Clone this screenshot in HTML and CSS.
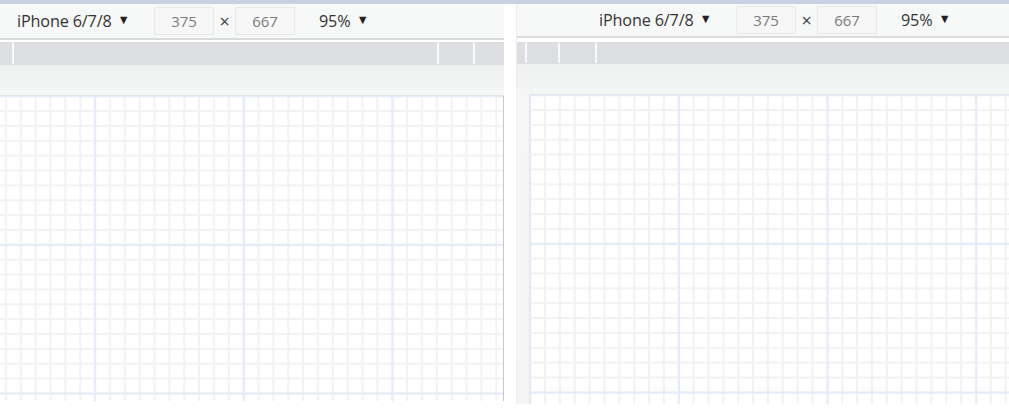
FILE: index.html
```html
<!DOCTYPE html>
<html>
<head>
<meta charset="utf-8">
<link rel="stylesheet" href="styles.css">
</head>
<body>
<div class="topband"></div>
<div class="panes">
  <section class="pane pane-left">
    <div class="toolbar">
      <span class="device">iPhone 6/7/8 <span class="caret">▼</span></span>
      <span class="box">375</span>
      <span class="times">×</span>
      <span class="box">667</span>
      <span class="zoomlvl">95% <span class="caret">▼</span></span>
    </div>
    <div class="ruler">
      <i class="tick" style="margin-left:12px"></i>
      <i class="tick" style="margin-left:423px"></i>
      <i class="tick" style="margin-left:34px"></i>
    </div>
    <div class="canvas">
      <div class="grid grid-left"></div>
    </div>
  </section>
  <section class="pane pane-right">
    <div class="toolbar">
      <span class="device">iPhone 6/7/8 <span class="caret">▼</span></span>
      <span class="box">375</span>
      <span class="times">×</span>
      <span class="box">667</span>
      <span class="zoomlvl">95% <span class="caret">▼</span></span>
    </div>
    <div class="ruler">
      <i class="tick" style="margin-left:8px"></i>
      <i class="tick" style="margin-left:31px"></i>
      <i class="tick" style="margin-left:35px"></i>
    </div>
    <div class="canvas">
      <div class="grid grid-right"></div>
    </div>
  </section>
</div>
</body>
</html>
```
FILE: styles.css
```css
html, body {
  margin: 0;
  padding: 0;
  background: #ffffff;
  overflow: hidden;
}
body {
  width: 1009px;
  height: 413px;
  font-family: "Open Sans", "Noto Sans", sans-serif;
  color: #333;
}
.topband {
  height: 4px;
  background: #c8d0e1;
}
.panes {
  display: flex;
  gap: 12px;
}
.pane {
  display: flex;
  flex-direction: column;
}
.pane-left {
  width: 504px;
}
.pane-right {
  flex: 1;
  border-left: 1px solid #eceeee;
}
.toolbar {
  background: #f7f8f8;
  border-bottom: 2px solid #d9dbdd;
  display: flex;
  align-items: center;
  font-size: 16.2px;
  letter-spacing: -0.15px;
  box-sizing: border-box;
  height: 36px;
}
.pane-left .toolbar {
  padding-left: 17px;
}
.pane-right .toolbar {
  padding-left: 82px;
  height: 34px;
}
.caret {
  font-size: 12.5px;
  position: relative;
  top: -3px;
  margin-left: 2px;
  color: #222;
}
.device {
  width: 137px;
  white-space: nowrap;
}
.box {
  width: 58px;
  height: 26px;
  border: 1px solid #e7e8e8;
  background: #f7f7f7;
  color: #7b7b7b;
  display: flex;
  align-items: center;
  justify-content: center;
  font-size: 15px;
}
.times {
  width: 21px;
  text-align: center;
  color: #444;
  font-size: 18px;
  line-height: 1;
}
.zoomlvl {
  margin-left: 24px;
  white-space: nowrap;
}
.ruler {
  margin-top: 2px;
  height: 23px;
  background: #dcdee2;
  display: flex;
  align-items: stretch;
  padding: 1px 0 1px;
  box-sizing: border-box;
}
.pane-right .ruler {
  margin-top: 4px;
  height: 22px;
}
.tick {
  display: block;
  width: 2px;
  background: #f8f9fa;
}
.canvas {
  background: linear-gradient(#eff0f0, #f5f6f6 30px, #f4f5f5);
  padding-top: 30px;
}
.grid {
  background-color: #ffffff;
  border-top: 1px solid #e6e6e6;
  background-image:
    linear-gradient(to right, #e4ecfb 1.6px, transparent 1.6px),
    linear-gradient(to bottom, #e4ecfb 1.6px, transparent 1.6px),
    linear-gradient(to right, #f2f2f2 1.8px, transparent 1.8px),
    linear-gradient(to bottom, #f2f2f2 1.8px, transparent 1.8px);
  background-size: 148.7px 148.7px, 148.7px 148.7px, 14.87px 14.87px, 14.87px 14.87px;
}
.grid-left {
  height: 305px;
  border-right: 1px solid #c9c9c9;
  background-position: -54.5px -0.8px;
}
.grid-right {
  height: 309px;
  margin-left: 12px;
  border-left: 1px solid #e6e6e6;
  background-position: -0.8px -0.8px;
}
```
